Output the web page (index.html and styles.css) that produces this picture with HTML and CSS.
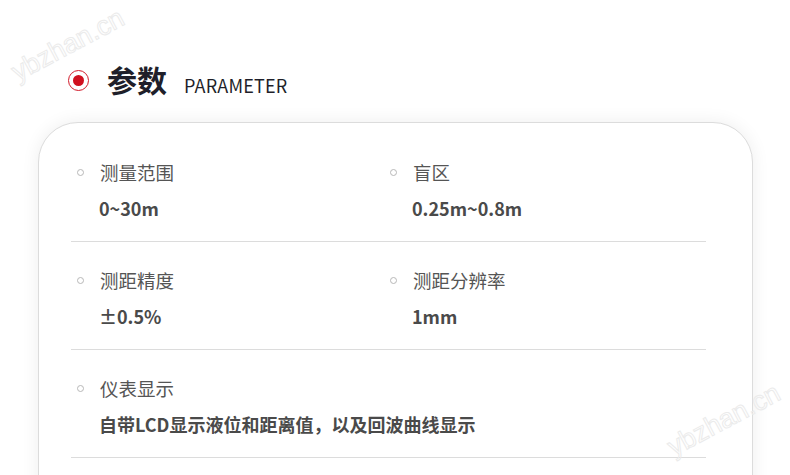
FILE: index.html
```html
<!DOCTYPE html>
<html lang="zh">
<head>
<meta charset="utf-8">
<link rel="stylesheet" href="styles.css">
</head>
<body>
<div class="page">
  <div class="watermark wm-top">ybzhan.cn</div>
  <div class="watermark wm-bottom">ybzhan.cn</div>
  <header class="title">
    <span class="title-icon"><span class="title-dot"></span></span>
    <h2 class="title-cn">参数</h2>
    <span class="title-en">PARAMETER</span>
  </header>
  <section class="card">
    <div class="row">
      <div class="item">
        <div class="label"><span class="bullet"></span>测量范围</div>
        <div class="value">0~30m</div>
      </div>
      <div class="item">
        <div class="label"><span class="bullet"></span>盲区</div>
        <div class="value">0.25m~0.8m</div>
      </div>
    </div>
    <div class="row">
      <div class="item">
        <div class="label"><span class="bullet"></span>测距精度</div>
        <div class="value">±0.5%</div>
      </div>
      <div class="item">
        <div class="label"><span class="bullet"></span>测距分辨率</div>
        <div class="value">1mm</div>
      </div>
    </div>
    <div class="row">
      <div class="item wide">
        <div class="label"><span class="bullet"></span>仪表显示</div>
        <div class="value">自带LCD显示液位和距离值，以及回波曲线显示</div>
      </div>
    </div>
  </section>
</div>
</body>
</html>
```
FILE: styles.css
```css
* { box-sizing: border-box; }
html, body {
  margin: 0;
  padding: 0;
  background: #fff;
  overflow: hidden;
}
body {
  font-family: "Noto Sans CJK SC", "Noto Sans", sans-serif;
  width: 790px;
  height: 475px;
}
.page {
  position: relative;
  padding: 59px 38px 0 38px;
  width: 790px;
  height: 475px;
}
.watermark {
  position: absolute;
  font-family: "Liberation Sans", sans-serif;
  font-size: 27px;
  line-height: 28px;
  color: transparent;
  -webkit-text-stroke: 1px #ebebeb;
  transform: rotate(-28deg);
  transform-origin: left bottom;
  white-space: nowrap;
  z-index: 2;
  pointer-events: none;
}
.wm-top { left: 20px; top: 58px; }
.wm-bottom { left: 676px; top: 433px; }
.title {
  display: flex;
  align-items: center;
  height: 42px;
  padding-left: 30px;
}
.title-icon {
  width: 21px;
  height: 21px;
  border: 1.5px solid #d21b2a;
  border-radius: 50%;
  display: flex;
  align-items: center;
  justify-content: center;
  flex: none;
}
.title-dot {
  width: 11px;
  height: 11px;
  border-radius: 50%;
  background: #d0101f;
}
.title-cn {
  margin: -2px 0 0 18px;
  font-size: 30px;
  font-weight: 700;
  color: #1f1f2a;
  line-height: 38px;
}
.title-en {
  margin: 9px 0 0 17px;
  font-size: 18px;
  color: #1f1f2a;
  letter-spacing: 0.2px;
}
.card {
  margin-top: 21px;
  width: 715px;
  height: 420px;
  background: #fff;
  border: 1px solid #dcdcdc;
  border-radius: 40px 40px 0 0;
  box-shadow: 0 0 18px rgba(0,0,0,0.07);
  padding: 11px 46px 0 32px;
}
.row {
  display: grid;
  grid-template-columns: 313px 1fr;
  border-bottom: 1px solid #dcdcdc;
  padding: 26px 0 20px 0;
}
.item.wide { grid-column: 1 / 3; }
.label {
  display: flex;
  align-items: center;
  font-size: 18.5px;
  line-height: 24px;
  color: #555;
  padding-left: 6px;
}
.bullet {
  width: 7px;
  height: 7px;
  border: 1px solid #b8b8b8;
  border-radius: 50%;
  margin-right: 16px;
  flex: none;
}
.value {
  margin-top: 11px;
  padding-left: 28px;
  font-size: 18px;
  line-height: 26px;
  font-weight: 700;
  color: #4a4a4a;
}
```
